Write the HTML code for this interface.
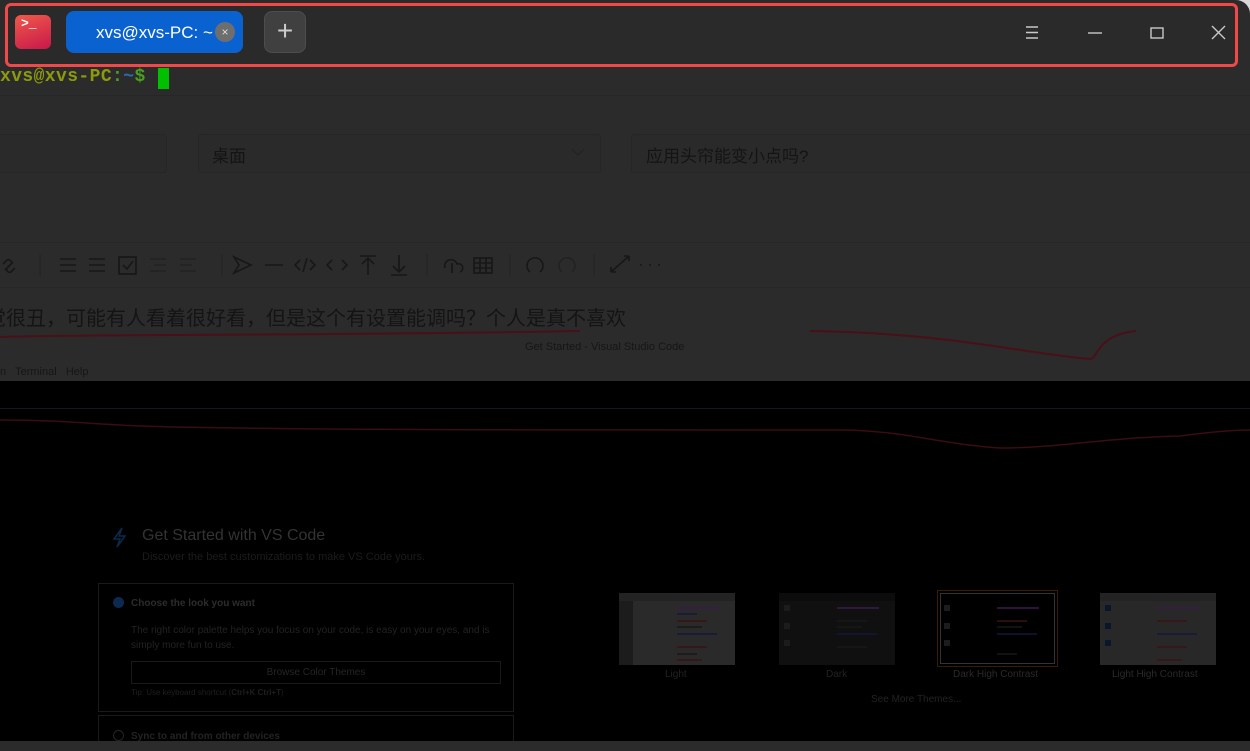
<!DOCTYPE html>
<html><head><meta charset="utf-8"><style>
*{margin:0;padding:0;box-sizing:border-box}
body{width:1250px;height:751px;overflow:hidden;background:#d8d8d8;font-family:"Liberation Sans","Noto Sans CJK SC",sans-serif;position:relative}
.win{position:absolute;left:0;top:0;width:1250px;height:751px;background:#2b2b2b;border-radius:0 14px 0 0;overflow:hidden}
.abs{position:absolute}
.box{position:absolute;border:1px solid #262626;border-radius:3px;background:#2a2a2a}
</style></head><body>
<div class="win">
 <div class="abs" style="left:5px;top:3px;width:1233px;height:64px;border:3px solid #f0494a;border-radius:6px;background:#2a2a2a"></div>
 <div class="abs" style="left:15px;top:15px;width:36px;height:34px;border-radius:6px;background:linear-gradient(160deg,#f05a4a,#c8174a)"></div>
 <div class="abs" style="left:21px;top:16px;color:#fff;font:bold 13px 'Liberation Mono',monospace">&gt;_</div>
 <div class="abs" style="left:66px;top:11px;width:177px;height:42px;border-radius:8px;background:#0a62d0"></div>
 <div class="abs" style="left:96px;top:23px;color:#fff;font-size:17px">xvs@xvs-PC: ~</div>
 <div class="abs" style="left:215px;top:22px;width:20px;height:20px;border-radius:50%;background:#6e6e6e;color:#ddd;font-size:12px;text-align:center;line-height:20px">×</div>
 <div class="abs" style="left:264px;top:11px;width:42px;height:42px;border-radius:8px;background:#404040;border:1px solid #4d4d4d;color:#ccc;font-size:28px;text-align:center;line-height:38px;font-weight:300">+</div>
 <svg class="abs" style="left:1020px;top:20px" width="210" height="25" viewBox="0 0 210 25" stroke="#c8c8c8" stroke-width="1.4" fill="none">
  <path d="M6 7h12M6 12.5h12M6 18h12"/>
  <path d="M68 13h14"/>
  <rect x="131" y="8" width="12" height="10"/>
  <path d="M192 6l13 13M205 6l-13 13"/>
 </svg>
 <div class="abs" style="left:0;top:67px;font:bold 18px 'Liberation Mono','DejaVu Sans Mono',monospace;letter-spacing:0.4px;color:#8c9a0c;white-space:pre">xvs@xvs-PC<span style="color:#4aa020">:</span><span style="color:#2a6cb0">~</span><span style="color:#4aa020">$</span></div>
 <div class="abs" style="left:158px;top:68px;width:11px;height:21px;background:#00c000"></div>
 <div class="abs" style="left:0;top:95px;width:1250px;height:1px;background:#262626"></div>
 <div class="box" style="left:-5px;top:134px;width:172px;height:39px"></div>
 <div class="box" style="left:198px;top:134px;width:403px;height:39px"></div>
 <div class="abs" style="left:212px;top:142px;font-size:17px;color:#141414">桌面</div>
 <svg class="abs" style="left:570px;top:146px" width="16" height="12"><path d="M2 3l6 6 6-6" stroke="#222" fill="none"/></svg>
 <div class="box" style="left:631px;top:134px;width:625px;height:39px"></div>
 <div class="abs" style="left:646px;top:142px;font-size:17px;color:#141414">应用头帘能变小点吗?</div>
 <div class="abs" style="left:0;top:242px;width:1250px;height:1px;background:#262626"></div>
 <div class="abs" style="left:0;top:287px;width:1250px;height:1px;background:#262626"></div>
 <svg class="abs" style="left:0;top:250px" width="670" height="32" fill="none" stroke="#171717" stroke-width="1.6">
  <path d="M5 20l8-8M3 14l4-4a3 3 0 014 4M15 18l-4 4a3 3 0 01-4-4"/>
  <path d="M40 4v22M222 4v22M427 4v22M510 4v22M594 4v22" stroke="#262626"/>
  <path d="M60 9h16M60 15h16M60 21h16M89 9h16M89 15h16M89 21h16"/>
  <rect x="119" y="7" width="17" height="17"/><path d="M123 15l4 4 6-8"/>
  <path d="M150 9h16M154 15h12M150 21h16M180 9h16M180 15h12M180 21h16" stroke="#222"/>
  <path d="M234 7l17 8-17 8 5-8z"/><path d="M265 15h18"/>
  <path d="M300 10l-5 5 5 5M310 10l5 5-5 5M307 8l-4 14"/>
  <path d="M332 10l-5 5 5 5M342 10l5 5-5 5"/>
  <path d="M360 6h16M368 8v17M362 14l6-6 6 6"/><path d="M391 25h16M399 5v17M393 16l6 6 6-6"/>
  <path d="M445 18a6 6 0 0112-4 4 4 0 013 8M452 13v10"/>
  <rect x="474" y="8" width="18" height="15"/><path d="M474 13h18M474 18h18M480 8v15M486 8v15"/>
  <path d="M530 22a8 8 0 1110 0"/><path d="M562 22a8 8 0 1110 0" stroke="#222"/>
  <path d="M611 22l18-16M611 22v-5M611 22h5M629 6h-5M629 6v5"/>
  <path d="M640 15h2M649 15h2M658 15h2"/>
 </svg>
 <div class="abs" style="left:-14px;top:302px;font-size:20px;color:#141414;white-space:nowrap">觉很丑，可能有人看着很好看，但是这个有设置能调吗？个人是真不喜欢</div>
 <svg class="abs" style="left:0;top:325px" width="1250" height="40" fill="none" stroke="#4a0f18" stroke-width="2">
  <path d="M0 12c100-3 300-1 580-6"/>
  <path d="M810 6C950 8 1020 28 1090 34C1098 34 1096 10 1136 6"/>
 </svg>
 <div class="abs" style="left:525px;top:341px;font-size:11px;color:#161616">Get Started - Visual Studio Code</div>
 <div class="abs" style="left:0;top:366px;font-size:11px;color:#161616;white-space:pre">n   Terminal   Help</div>
 <div class="abs" style="left:0;top:381px;width:1250px;height:360px;background:#000"></div>
 <div class="abs" style="left:0;top:408px;width:1250px;height:1px;background:#14142a"></div>
 <svg class="abs" style="left:0;top:410px" width="1250" height="40" fill="none" stroke="#3a0c14" stroke-width="1.5">
  <path d="M0 10c60 0 90 4 140 6 120 4 400 4 700 4 60 0 100 14 160 18 60 0 100-10 180-12 30-4 50-6 70-6"/>
 </svg>
 <svg class="abs" style="left:110px;top:526px" width="20" height="22" fill="none" stroke="#0a2a4a" stroke-width="1.5"><path d="M12 2l-8 11h6l-3 8 8-11h-6z"/></svg>
 <div class="abs" style="left:142px;top:527px;font-size:16px;color:#333">Get Started with VS Code</div>
 <div class="abs" style="left:142px;top:551px;font-size:11px;color:#1c1c1c">Discover the best customizations to make VS Code yours.</div>
 <div class="abs" style="left:98px;top:583px;width:416px;height:129px;border:1px solid #1a1a1a"></div>
 <div class="abs" style="left:113px;top:597px;width:11px;height:11px;border-radius:50%;background:#0c2a50"></div>
 <div class="abs" style="left:131px;top:598px;font-size:10px;font-weight:bold;color:#2c2c2c">Choose the look you want</div>
 <div class="abs" style="left:131px;top:623px;width:375px;font-size:10px;line-height:15px;color:#222">The right color palette helps you focus on your code, is easy on your eyes, and is simply more fun to use.</div>
 <div class="abs" style="left:131px;top:661px;width:370px;height:23px;border:1px solid #1a1a1a;font-size:10px;color:#252525;text-align:center;line-height:22px">Browse Color Themes</div>
 <div class="abs" style="left:131px;top:688px;font-size:8px;color:#1e1e1e">Tip: Use keyboard shortcut (<b>Ctrl+K Ctrl+T</b>)</div>
 <div class="abs" style="left:98px;top:715px;width:416px;height:40px;border:1px solid #1a1a1a"></div>
 <div class="abs" style="left:113px;top:730px;width:11px;height:11px;border-radius:50%;border:1px solid #252525"></div>
 <div class="abs" style="left:131px;top:731px;font-size:10px;font-weight:bold;color:#232323">Sync to and from other devices</div>
 <div class="abs" style="left:619px;top:593px;width:116px;height:72px;background:#2a2a2a;border-top:8px solid #232323"><div style="width:14px;height:64px;background:#1c1c1c"></div></div>
 <div class="abs" style="left:779px;top:593px;width:116px;height:72px;background:#101010;border-top:8px solid #0c0c0c"></div>
 <div class="abs" style="left:937px;top:590px;width:121px;height:77px;border:1px solid #3a1c04;background:#000"><div style="position:absolute;left:2px;top:2px;right:2px;bottom:2px;border:1px solid #333"></div></div>
 <div class="abs" style="left:1100px;top:593px;width:116px;height:72px;background:#282828;border-top:8px solid #232323"></div>
 <div class="abs" style="left:665px;top:669px;font-size:10px;color:#222">Light</div>
 <div class="abs" style="left:826px;top:669px;font-size:10px;color:#222">Dark</div>
 <div class="abs" style="left:953px;top:669px;font-size:10px;color:#2a2a2a">Dark High Contrast</div>
 <div class="abs" style="left:1112px;top:669px;font-size:10px;color:#2a2a2a">Light High Contrast</div>
 <div class="abs" style="left:871px;top:694px;font-size:10px;color:#222">See More Themes...</div>
 <svg class="abs" style="left:600px;top:600px" width="650" height="70" stroke-width="1.5">
  <g stroke="#3a1a4a"><path d="M77 8h42M237 8h42M397 8h42M557 8h42"/></g>
  <g stroke="#12183a"><path d="M77 14h20M77 34h40M237 34h40M397 34h40M557 34h40"/></g>
  <g stroke="#3a1212"><path d="M77 21h30M77 47h30M77 60h25M557 21h30M557 47h30M557 60h25M397 21h30"/></g>
  <g stroke="#181818"><path d="M77 27h25M77 54h20M237 21h30M237 27h25M237 47h30M397 27h25M397 54h20"/></g>
  <g fill="#1c1c1c" stroke="none"><rect x="24" y="5" width="6" height="6"/><rect x="24" y="23" width="6" height="6"/><rect x="24" y="40" width="6" height="6"/><rect x="184" y="5" width="6" height="6"/><rect x="184" y="23" width="6" height="6"/><rect x="184" y="40" width="6" height="6"/><rect x="344" y="5" width="6" height="6"/><rect x="344" y="23" width="6" height="6"/><rect x="344" y="40" width="6" height="6"/></g>
  <g fill="#08182a" stroke="none"><rect x="505" y="5" width="6" height="6"/><rect x="505" y="23" width="6" height="6"/><rect x="505" y="40" width="6" height="6"/></g>
 </svg>
 <div class="abs" style="left:0;top:741px;width:1250px;height:10px;background:#2b2b2b"></div>
</div>
</body></html>
